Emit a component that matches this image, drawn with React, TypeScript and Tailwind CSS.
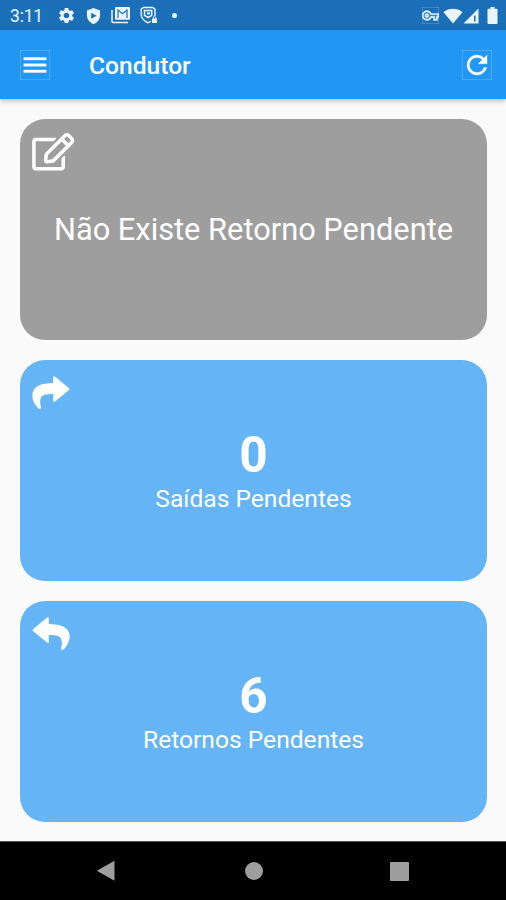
import type { ReactNode } from 'react'
import { FaRegEdit } from 'react-icons/fa'
import { MdMenu, MdRefresh, MdSettings, MdOutlineVpnKey } from 'react-icons/md'

function ForwardIcon({ className = '' }: { className?: string }) {
  return (
    <svg viewBox="0 0 38 34" fill="currentColor" className={`w-[38px] h-[34px] ${className}`} aria-hidden>
      <path d="M21.2 1.2C21.2.2 22.2-.1 23 .6L37 12.2c.7.6.7 1.1 0 1.7L23 25.6c-.8.7-1.8.3-1.8-.7v-7C15 17.8 9.8 18.5 8.7 22.2c-.8 2.8-.8 5.5.2 8.6.5 1.7-1.2 2.6-2.6 1.4C2.500 28.900.3 24.300.300 19.600.300 9.900 9.500 7.100 21.200 6.900z" />
    </svg>
  )
}

function StatusBar() {
  return (
    <header className="flex h-[30px] shrink-0 items-center bg-[#1a6fb8] pl-[10px] text-[#eaf5ff]">
      <span className="w-[47px] text-[17.5px] leading-[30px] tracking-[-0.2px] pt-[2px]">3:11</span>
      <MdSettings className="size-[19px] mt-px" />
      <svg viewBox="0 0 16 18" className="ml-[10px] mt-px h-[18px] w-[15px]" aria-hidden>
        <path d="M8 .5l7 2.700v5.200c0 4.300-3 7.500-7 9.100-4-1.600-7-4.800-7-9.100V3.200z" fill="currentColor" />
        <path d="M5.500 5.400L11.300 8.600 5.500 11.900z" fill="#1a6fb8" />
      </svg>
      <svg viewBox="0 0 20 18" className="ml-[10px] h-[18px] w-5" fill="none" stroke="currentColor" aria-hidden>
        <path d="M1 4v11.500q0 1 1 1h15" strokeWidth="1.500" />
        <rect x="4" y="1" width="15" height="12.800" rx="1" fill="currentColor" stroke="none" />
        <path d="M7 12V4l4.500 3.800L16 4v8" stroke="#1a6fb8" strokeWidth="1.200" />
      </svg>
      <svg viewBox="0 0 18 18" className="ml-[9px] h-[18px] w-[18px]" fill="none" stroke="currentColor" aria-hidden>
        <path d="M11 15.200l-3 1.600C4 14.800 1.200 12 1.200 8.200V3.200L3.500 1.500h9.200l2.300 1.700V10" strokeWidth="1.400" />
        <path d="M4.500 4.600h7.200v4.700l-3.600 2.200-3.600-2.200z" strokeWidth="1.500" />
        <path d="M7 6.300h3v2H7z" fill="currentColor" stroke="none" />
        <path d="M12 12.500h5v4.500h-5z" fill="currentColor" stroke="none" />
        <path d="M13.300 13v-1.300a1.200 1.200 0 0 1 2.400 0V13" />
      </svg>
      <span className="ml-[14px] size-[5px] rounded-full bg-current" />
      <div className="ml-auto flex items-center pr-[8px] pt-px">
        <MdOutlineVpnKey className="h-[17px] w-[17px]" stroke="currentColor" strokeWidth="0.5" />
        <svg viewBox="0 0 20 16" className="ml-[4px] h-4 w-[20px]" fill="currentColor" aria-hidden>
          <path d="M10 15.500L.500 4.200C5.500-.400 14.500-.400 19.500 4.200z" />
        </svg>
        <svg viewBox="0 0 16 16" className="h-4 w-[16px]" aria-hidden>
          <path d="M.500 15.500L15.500.500v15z" fill="currentColor" />
          <path d="M11 7.500h1.500v6h-1.500z" fill="#1a6fb8" />
        </svg>
        <svg viewBox="0 0 11 17" className="ml-[8px] h-[17px] w-[11px]" fill="currentColor" aria-hidden>
          <path d="M3.500 0h4v1.800h2q1 0 1 1V16q0 1-1 1h-8q-1 0-1-1V2.800q0-1 1-1h2z" />
        </svg>
      </div>
    </header>
  )
}

interface CardProps {
  icon: ReactNode
  color?: string
  children: ReactNode
}

function Card({ icon, color = 'bg-[#64b4f6]', children }: CardProps) {
  return (
    <section className={`relative flex h-[221px] shrink-0 flex-col items-center justify-center rounded-[25px] text-white ${color}`}>
      <div className="absolute left-3 top-[14px]">{icon}</div>
      {children}
    </section>
  )
}

function CountCard({ icon, count, label }: { icon: ReactNode; count: number; label: string }) {
  return (
    <Card icon={icon}>
      <p className="text-[49.5px] font-bold leading-[56px]">{count}</p>
      <p className="text-[24.6px] leading-[32px]">{label}</p>
    </Card>
  )
}

export default function App() {
  return (
    <div className="flex h-[900px] w-[506px] flex-col overflow-hidden bg-[#fafafa] font-['Roboto',sans-serif]">
      <StatusBar />
      <nav className="relative flex h-[69px] shrink-0 items-center bg-[#2196f3] text-white shadow-[0_2px_5px_rgba(0,0,0,0.25)]">
        <MdMenu className="ml-5 size-[30px]" stroke="currentColor" strokeWidth="0.3" />
        <h1 className="ml-[39px] pt-[3px] text-[24.6px] font-medium">Condutor</h1>
        <MdRefresh className="ml-auto mr-[14px] size-[30px]" stroke="currentColor" strokeWidth="0.3" />
      </nav>
      <main className="flex flex-1 flex-col gap-5 pl-5 pr-[19px] pt-5">
        <Card color="bg-[#9e9e9e]" icon={<FaRegEdit className="h-[37.5px] w-[42.5px]" />}>
          <p className="whitespace-nowrap text-[30.8px] leading-9">Não Existe Retorno Pendente</p>
        </Card>
        <CountCard icon={<ForwardIcon className="mt-[2px]" />} count={0} label="Saídas Pendentes" />
        <CountCard icon={<ForwardIcon className="mt-[2px] -scale-x-100" />} count={6} label="Retornos Pendentes" />
      </main>
      <footer className="flex h-[59px] shrink-0 items-center border-t border-[#555] bg-black pl-[96px] text-[#9e9e9e]">
        <svg viewBox="0 0 19 22" className="h-[22px] w-[19px]" fill="currentColor" aria-hidden>
          <path d="M18.500.800v20L.800 10.800z" />
        </svg>
        <span className="ml-[130px] size-[18px] rounded-full bg-current" />
        <span className="ml-[127px] size-[19px] rounded-[1px] bg-current" />
      </footer>
    </div>
  )
}
